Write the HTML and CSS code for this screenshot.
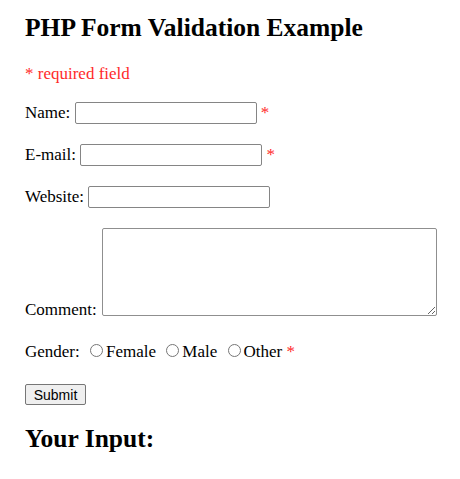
FILE: index.html
```html
<!DOCTYPE html>
<html lang="en">
<head>
<meta charset="utf-8">
<title>PHP Form Validation Example</title>
<link rel="stylesheet" href="styles.css">
</head>
<body>
<h2 class="title">PHP Form Validation Example</h2>
<p class="note"><span class="error">* required field</span></p>
<form class="form" method="post" action="#">
  <div class="field">Name: <input type="text" class="text-input" name="name"> <span class="error">*</span></div>
  <div class="field">E-mail: <input type="text" class="text-input" name="email"> <span class="error">*</span></div>
  <div class="field">Website: <input type="text" class="text-input" name="website"></div>
  <div class="field field-comment"><span class="comment-label">Comment:</span><textarea class="comment-box" name="comment" rows="5" cols="40"></textarea></div>
  <div class="field">Gender:
    <input type="radio" class="radio" name="gender" value="female">Female
    <input type="radio" class="radio" name="gender" value="male">Male
    <input type="radio" class="radio" name="gender" value="other">Other
    <span class="error">*</span></div>
  <div class="field field-submit"><input type="submit" class="submit" name="submit" value="Submit"></div>
</form>
<h2 class="title">Your Input:</h2>
</body>
</html>
```

FILE: styles.css
```css
html, body {
  background: #ffffff;
}

body {
  margin: 0;
  padding: 13px 25px 0;
  font-family: "Liberation Serif", "Times New Roman", serif;
  font-size: 17px;
  color: #000000;
}

.title {
  margin: 0 0 20px;
  font-size: 25.5px;
  line-height: 30px;
  font-weight: bold;
}

.note {
  margin: 0 0 17px;
  height: 22px;
  line-height: 22px;
}

.error {
  color: #ff2a2a;
}

.form {
  margin: 0;
}

.field {
  height: 22px;
  line-height: 22px;
  margin-bottom: 20px;
  white-space: nowrap;
}

.text-input {
  box-sizing: border-box;
  width: 182px;
  height: 22px;
  margin: 0;
  padding: 1px 2px;
  border: 1px solid #858585;
  border-radius: 2px;
  background: #ffffff;
  vertical-align: top;
  font: 13px "Liberation Sans", Arial, sans-serif;
}

.field-comment {
  height: auto;
  display: flex;
  align-items: flex-end;
  gap: 5px;
  margin-bottom: 25px;
}

.comment-label {
  flex-shrink: 0;
  line-height: 13px;
}

.comment-box {
  flex-shrink: 0;
  box-sizing: border-box;
  width: 335px;
  height: 88px;
  margin: 0;
  padding: 2px;
  border: 1px solid #8f8f8f;
  border-radius: 2px;
  background: #ffffff;
  font: 13px "Liberation Mono", monospace;
}

.radio {
  width: 13px;
  height: 13px;
  margin: 3px 3px 0 6px;
  vertical-align: baseline;
}

.field-submit {
  height: 21px;
  margin-bottom: 19px;
  margin-top: 21px;
}

.submit {
  box-sizing: border-box;
  height: 21px;
  width: 61px;
  margin: 0;
  padding: 0 6px;
  border: 1px solid #767676;
  border-radius: 2px;
  background: #efefef;
  color: #000000;
  font: 14px "Liberation Sans", Arial, sans-serif;
  vertical-align: top;
}
```
